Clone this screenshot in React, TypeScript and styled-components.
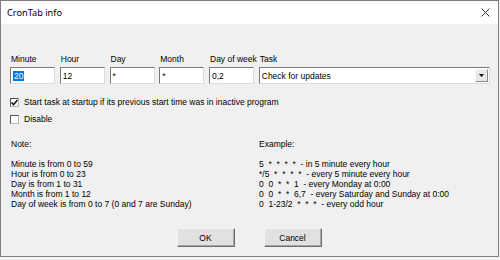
import React from "react";
import styled, { createGlobalStyle } from "styled-components";

const GlobalStyle = createGlobalStyle`
  html, body {
    margin: 0;
    padding: 0;
    background: #f4f4f4;
  }
  body {
    font-family: "Liberation Sans", Arial, sans-serif;
  }
`;

const Window = styled.div`
  box-sizing: border-box;
  width: 499px;
  height: 257px;
  border: 1px solid #7f7f7f;
  background: #f0f0f0;
  display: flex;
  flex-direction: column;
  font-size: 8.5px;
  color: #000;
`;

const TitleBar = styled.div`
  height: 23px;
  background: #fff;
  display: flex;
  align-items: center;
  justify-content: space-between;
  padding: 0 7px 0 6px;
  font-size: 9.2px;
  font-family: "Noto Sans", "Liberation Sans", sans-serif;
`;

const CloseIcon = styled.svg`
  width: 9px;
  height: 9px;
  margin-right: 1px;
`;

const Content = styled.div`
  flex: 1;
  display: flex;
  flex-direction: column;
  padding: 30px 8px 0 9px;
`;

const FieldGrid = styled.div`
  display: grid;
  grid-template-columns: repeat(5, 45px) 1fr;
  column-gap: 4.75px;
  row-gap: 2px;
`;

const FieldLabel = styled.label`
  padding-left: 1px;
  line-height: 11px;
  white-space: nowrap;
`;

const TextBox = styled.div`
  box-sizing: border-box;
  height: 17px;
  background: #fff;
  border: 1px solid;
  border-color: #7a7a7a #dcdcdc #dcdcdc #7a7a7a;
  display: flex;
  align-items: center;
  padding-left: 2px;
`;

const Selected = styled.span`
  background: #0078d7;
  color: #fff;
  padding: 0 1px;
`;

const DropButton = styled.div`
  box-sizing: border-box;
  width: 13px;
  height: 13px;
  margin-left: auto;
  margin-right: 1px;
  background: #e8e8e8;
  border: 1px solid;
  border-color: #f8f8f8 #8a8a8a #8a8a8a #f8f8f8;
  display: flex;
  align-items: center;
  justify-content: center;
`;

const CheckRow = styled.div<{ $top: number }>`
  display: flex;
  align-items: center;
  gap: 5px;
  margin-top: ${(p) => p.$top}px;
  line-height: 11px;
`;

const CheckBox = styled.div`
  box-sizing: border-box;
  width: 9px;
  height: 9px;
  background: #fff;
  border: 1px solid;
  border-color: #555 #b8b8b8 #b8b8b8 #555;
  display: flex;
  align-items: center;
  justify-content: center;
`;

const InfoColumns = styled.div`
  display: grid;
  grid-template-columns: 248px 1fr;
  margin-top: 14px;
`;

const InfoBlock = styled.div`
  display: flex;
  flex-direction: column;
  padding-left: 1px;
`;

const InfoTitle = styled.div`
  line-height: 11px;
  margin-bottom: 9px;
`;

const InfoLine = styled.div`
  line-height: 10px;
  white-space: pre;
`;

const ButtonRow = styled.div`
  display: flex;
  justify-content: center;
  gap: 29px;
  margin-top: 19px;
  padding-right: 2px;
`;

const Button = styled.button`
  box-sizing: border-box;
  width: 58px;
  height: 19px;
  background: #e1e1e1;
  border: 1px solid;
  border-color: #f4f4f4 #6f6f6f #6f6f6f #f4f4f4;
  box-shadow: inset -1px -1px 0 #a8a8a8;
  font-family: "Liberation Sans", Arial, sans-serif;
  font-size: 8.5px;
  color: #000;
  padding: 0;
`;

const fields = [
  { label: "Minute", value: "20", selected: true },
  { label: "Hour", value: "12" },
  { label: "Day", value: "*" },
  { label: "Month", value: "*" },
  { label: "Day of week", value: "0,2" },
];

const notes = [
  "Minute is from 0 to 59",
  "Hour is from 0 to 23",
  "Day is from 1 to 31",
  "Month is from 1 to 12",
  "Day of week is from 0 to 7 (0 and 7 are Sunday)",
];

const examples = [
  "5  *  *  *  *  - in 5 minute every hour",
  "*/5  *  *  *  *  - every 5 minute every hour",
  "0  0  *  *  1  - every Monday at 0:00",
  "0  0  *  *  6,7  - every Saturday and Sunday at 0:00",
  "0  1-23/2  *  *  *  - every odd hour",
];

function CheckMark(): JSX.Element {
  return (
    <svg width="7" height="7" viewBox="0 0 7 7">
      <path d="M0.5 3.5 L2.6 5.6 L6.5 1" fill="none" stroke="#000" strokeWidth="1.4" />
    </svg>
  );
}

function App(): JSX.Element {
  return (
    <>
      <GlobalStyle />
      <Window>
        <TitleBar>
          <span>CronTab info</span>
          <CloseIcon viewBox="0 0 9 9">
            <path d="M0.5 0.5 L8.5 8.5 M8.5 0.5 L0.5 8.5" stroke="#222" strokeWidth="0.9" />
          </CloseIcon>
        </TitleBar>
        <Content>
          <FieldGrid>
            {fields.map((f) => (
              <FieldLabel key={f.label}>{f.label}</FieldLabel>
            ))}
            <FieldLabel>Task</FieldLabel>
            {fields.map((f) => (
              <TextBox key={f.label}>
                {f.selected ? <Selected>{f.value}</Selected> : f.value}
              </TextBox>
            ))}
            <TextBox>
              Check for updates
              <DropButton>
                <svg width="5" height="3" viewBox="0 0 5 3">
                  <path d="M0 0 H5 L2.5 3 Z" fill="#000" />
                </svg>
              </DropButton>
            </TextBox>
          </FieldGrid>
          <CheckRow $top={13}>
            <CheckBox>
              <CheckMark />
            </CheckBox>
            Start task at startup if its previous start time was in inactive program
          </CheckRow>
          <CheckRow $top={6}>
            <CheckBox />
            Disable
          </CheckRow>
          <InfoColumns>
            <InfoBlock>
              <InfoTitle>Note:</InfoTitle>
              {notes.map((n) => (
                <InfoLine key={n}>{n}</InfoLine>
              ))}
            </InfoBlock>
            <InfoBlock>
              <InfoTitle>Example:</InfoTitle>
              {examples.map((e) => (
                <InfoLine key={e}>{e}</InfoLine>
              ))}
            </InfoBlock>
          </InfoColumns>
          <ButtonRow>
            <Button>OK</Button>
            <Button>Cancel</Button>
          </ButtonRow>
        </Content>
      </Window>
    </>
  );
}

export default App;
